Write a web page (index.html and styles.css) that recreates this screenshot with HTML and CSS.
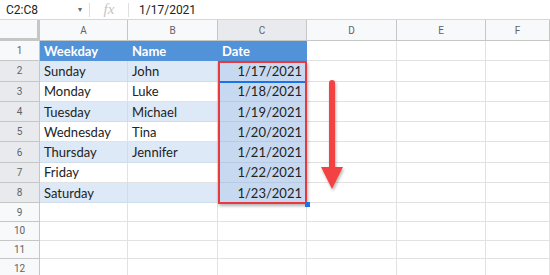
FILE: index.html
```html
<!DOCTYPE html>
<html lang="en">
<head>
  <meta charset="UTF-8">
  <title>Sheet</title>
  <link rel="stylesheet" href="styles.css">
</head>
<body>
  <div class="formula-bar">
    <div class="name-box">C2:C8</div>
    <span class="caret">&#9662;</span>
    <span class="sep"></span>
    <span class="fx">fx</span>
    <span class="sep"></span>
    <div class="formula">1/17/2021</div>
  </div>

  <div class="sheet">
    <div class="grid">
      <div class="corner"></div>
      <div class="col-head">A</div>
      <div class="col-head">B</div>
      <div class="col-head active">C</div>
      <div class="col-head">D</div>
      <div class="col-head">E</div>
      <div class="col-head">F</div>

      <div class="row-head">1</div>
      <div class="cell head">Weekday</div>
      <div class="cell head">Name</div>
      <div class="cell head">Date</div>
      <div class="cell"></div><div class="cell"></div><div class="cell"></div>

      <div class="row-head active">2</div>
      <div class="cell band">Sunday</div>
      <div class="cell band">John</div>
      <div class="cell date sel">1/17/2021</div>
      <div class="cell"></div><div class="cell"></div><div class="cell"></div>

      <div class="row-head active">3</div>
      <div class="cell">Monday</div>
      <div class="cell">Luke</div>
      <div class="cell date sel">1/18/2021</div>
      <div class="cell"></div><div class="cell"></div><div class="cell"></div>

      <div class="row-head active">4</div>
      <div class="cell band">Tuesday</div>
      <div class="cell band">Michael</div>
      <div class="cell date sel">1/19/2021</div>
      <div class="cell"></div><div class="cell"></div><div class="cell"></div>

      <div class="row-head active">5</div>
      <div class="cell">Wednesday</div>
      <div class="cell">Tina</div>
      <div class="cell date sel">1/20/2021</div>
      <div class="cell"></div><div class="cell"></div><div class="cell"></div>

      <div class="row-head active">6</div>
      <div class="cell band">Thursday</div>
      <div class="cell band">Jennifer</div>
      <div class="cell date sel">1/21/2021</div>
      <div class="cell"></div><div class="cell"></div><div class="cell"></div>

      <div class="row-head active">7</div>
      <div class="cell">Friday</div>
      <div class="cell"></div>
      <div class="cell date sel">1/22/2021</div>
      <div class="cell"></div><div class="cell"></div><div class="cell"></div>

      <div class="row-head active">8</div>
      <div class="cell band">Saturday</div>
      <div class="cell band"></div>
      <div class="cell date sel">1/23/2021</div>
      <div class="cell"></div><div class="cell"></div><div class="cell"></div>

      <div class="row-head">9</div>
      <div class="cell"></div><div class="cell"></div><div class="cell"></div>
      <div class="cell"></div><div class="cell"></div><div class="cell"></div>

      <div class="row-head">10</div>
      <div class="cell"></div><div class="cell"></div><div class="cell"></div>
      <div class="cell"></div><div class="cell"></div><div class="cell"></div>

      <div class="row-head">11</div>
      <div class="cell"></div><div class="cell"></div><div class="cell"></div>
      <div class="cell"></div><div class="cell"></div><div class="cell"></div>

      <div class="row-head">12</div>
      <div class="cell"></div><div class="cell"></div><div class="cell"></div>
      <div class="cell"></div><div class="cell"></div><div class="cell"></div>
    </div>

    <!-- selection box over C2:C8 -->
    <div class="selection">
      <span class="active-line"></span>
      <span class="handle"></span>
    </div>

    <svg class="arrow" width="30" height="118" viewBox="0 0 30 118">
      <defs>
        <filter id="shadow" x="-50%" y="-10%" width="200%" height="130%">
          <feDropShadow dx="1" dy="2" stdDeviation="1.5" flood-color="#000" flood-opacity="0.3"/>
        </filter>
      </defs>
      <g filter="url(#shadow)" fill="#f24242">
        <rect x="10" y="3" width="6" height="92" rx="3"/>
        <polygon points="2,90 24,90 13,112"/>
      </g>
    </svg>
  </div>
</body>
</html>
```

FILE: styles.css
```css
body {
  margin: 0;
  width: 550px;
  height: 275px;
  overflow: hidden;
  background: #fff;
  font-family: Lato, "Liberation Sans", sans-serif;
}

.formula-bar {
  display: flex;
  align-items: center;
  height: 19px;
  border-bottom: 1px solid #d6d6d6;
  font-family: Roboto, "Liberation Sans", sans-serif;
  font-size: 12px;
  color: #222;
}

.name-box {
  width: 72px;
  padding-left: 6px;
}

.caret {
  font-size: 8px;
  color: #666;
  margin-right: 7px;
}

.sep {
  width: 1px;
  height: 14px;
  background: #e0e0e0;
}

.fx {
  width: 38px;
  text-align: center;
  font-family: "Liberation Serif", serif;
  font-style: italic;
  font-size: 15px;
  color: #c4c4c4;
}

.formula {
  padding-left: 10px;
}

.sheet {
  position: relative;
}

.grid {
  display: grid;
  grid-template-columns: 40px 88px 90px 89px 90px 89px 64px;
  grid-template-rows: 21px repeat(8, 20.3px) repeat(4, 18.7px);
}

.grid > div {
  box-sizing: border-box;
  border-right: 1px solid #e2e2e2;
  border-bottom: 1px solid #e2e2e2;
}

.corner {
  background: #f8f9fa;
  border-right: 3px solid #c4c7c5 !important;
  border-bottom: 3px solid #c4c7c5 !important;
}

.col-head,
.row-head {
  display: flex;
  align-items: center;
  justify-content: center;
  background: #f8f9fa;
  color: #5f6368;
  font-family: Roboto, "Liberation Sans", sans-serif;
  font-size: 10px;
  border-right-color: #c4c7c5 !important;
  border-bottom-color: #c4c7c5 !important;
}

.col-head.active,
.row-head.active {
  background: #e8eaed;
}

.cell {
  display: flex;
  align-items: center;
  padding: 0 4px;
  font-size: 13px;
  color: #222;
  white-space: nowrap;
}

.cell.head {
  background: #5192d8;
  color: #fff;
  font-weight: bold;
  border-color: #5192d8 !important;
}

.cell.band {
  background: #dde9f6;
  border-color: #cfdcea !important;
}

.cell.date {
  justify-content: flex-end;
}

.cell.sel {
  background: #c6d9f1;
  border-color: #b8cbe3 !important;
}

.selection {
  position: absolute;
  left: 218px;
  top: 41px;
  width: 89px;
  height: 143px;
  box-sizing: border-box;
  border: 2px solid #e8393e;
  box-shadow: 1px 2px 3px rgba(0, 0, 0, 0.3);
}

.active-line {
  position: absolute;
  left: 0;
  right: 0;
  top: 18px;
  height: 2px;
  background: #1a73e8;
}

.handle {
  position: absolute;
  right: -5px;
  bottom: -5px;
  width: 5px;
  height: 5px;
  background: #1a73e8;
}

.arrow {
  position: absolute;
  left: 319px;
  top: 57px;
}
```
